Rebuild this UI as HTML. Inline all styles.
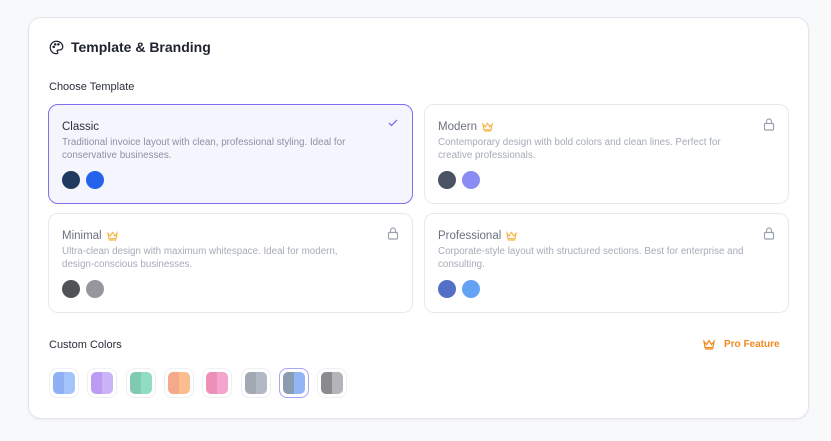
<!DOCTYPE html>
<html><head><style>
*{box-sizing:border-box;margin:0;padding:0}
body{width:831px;height:441px;background:#f8f9fb;font-family:"Liberation Sans",sans-serif;position:relative;overflow:hidden}
.outer{position:absolute;left:28px;top:17px;width:781px;height:402px;background:#fff;border:1px solid #e3e6ec;border-radius:13px;box-shadow:0 1px 2px rgba(0,0,0,.06)}
.h{position:absolute;left:49px;top:39px;font-size:14px;font-weight:bold;color:#1f2330;display:flex;align-items:center;gap:7px}
.lbl{position:absolute;left:49px;font-size:11px;color:#2a2f3a}
.card{position:absolute;width:365px;height:100px;border:1px solid #e6e9ef;border-radius:10px;background:#fff}
.card.sel{border-color:#7b6ff0;background:#f5f5fe}
.t{position:absolute;left:13px;top:16px;font-size:11.5px;color:#2a2f3a;display:flex;align-items:center;gap:5px}
.card.lk .t{color:#6b7080}
.d{position:absolute;left:13px;top:31px;width:300px;font-size:9.8px;line-height:13px;color:#8a92a3}
.card.lk .d{color:#a5abb8}
.dots{position:absolute;left:13px;top:66px;display:flex;gap:6px}
.dots span{width:18px;height:18px;border-radius:50%}
.ic{position:absolute;right:13px;top:13px}
.sw{position:absolute;top:368px;width:30px;height:30px;border-radius:8px;border:1px solid #eef0f4;padding:3px;background:#fff}
.sw.on{border:1.5px solid #a9a4f5}
.sw div{width:100%;height:100%;border-radius:5px;display:flex;overflow:hidden}
.sw div i{flex:1}
</style></head><body>
<div class="outer"></div>
<div class="h"><svg width="15" height="15" viewBox="0 0 24 24" fill="none" stroke="#1f2330" stroke-width="2"><path d="M12 2a10 10 0 0 0 0 20c1.5 0 2-1 2-2s-1-1.5-1-2.5 1-1.5 2-1.5h2a5 5 0 0 0 5-5C22 6 17.5 2 12 2z"/><circle cx="7.5" cy="11" r="1" fill="#1f2330"/><circle cx="10" cy="7" r="1" fill="#1f2330"/><circle cx="15" cy="7" r="1" fill="#1f2330"/></svg>Template &amp; Branding</div>
<div class="lbl" style="top:81px">Choose Template</div>

<div class="card sel" style="left:48px;top:104px"><div class="t">Classic</div>
<svg class="ic" style="top:12px" width="12" height="12" viewBox="0 0 24 24" fill="none" stroke="#7b6ff0" stroke-width="2.5"><path d="M4 12l5 5L20 6"/></svg>
<div class="d">Traditional invoice layout with clean, professional styling. Ideal for conservative businesses.</div>
<div class="dots"><span style="background:#1e3a5f"></span><span style="background:#2563eb"></span></div></div>

<div class="card lk" style="left:424px;top:104px"><div class="t">Modern <svg width="11" height="10" viewBox="0 0 24 22" fill="none" stroke="#f5b547" stroke-width="2.5"><path d="M2 5l5 6 5-8 5 8 5-6-2 12H4z M4 20h16"/></svg></div>
<svg class="ic" width="12" height="13" viewBox="0 0 24 26" fill="none" stroke="#9aa1ae" stroke-width="2.3"><rect x="3" y="11" width="18" height="13" rx="2"/><path d="M7 11V7a5 5 0 0 1 10 0v4"/></svg>
<div class="d">Contemporary design with bold colors and clean lines. Perfect for creative professionals.</div>
<div class="dots"><span style="background:#4b5261"></span><span style="background:#8b8cf3"></span></div></div>

<div class="card lk" style="left:48px;top:213px"><div class="t">Minimal <svg width="11" height="10" viewBox="0 0 24 22" fill="none" stroke="#f5b547" stroke-width="2.5"><path d="M2 5l5 6 5-8 5 8 5-6-2 12H4z M4 20h16"/></svg></div>
<svg class="ic" width="12" height="13" viewBox="0 0 24 26" fill="none" stroke="#9aa1ae" stroke-width="2.3"><rect x="3" y="11" width="18" height="13" rx="2"/><path d="M7 11V7a5 5 0 0 1 10 0v4"/></svg>
<div class="d">Ultra-clean design with maximum whitespace. Ideal for modern, design-conscious businesses.</div>
<div class="dots"><span style="background:#515257"></span><span style="background:#96969d"></span></div></div>

<div class="card lk" style="left:424px;top:213px"><div class="t">Professional <svg width="11" height="10" viewBox="0 0 24 22" fill="none" stroke="#f5b547" stroke-width="2.5"><path d="M2 5l5 6 5-8 5 8 5-6-2 12H4z M4 20h16"/></svg></div>
<svg class="ic" width="12" height="13" viewBox="0 0 24 26" fill="none" stroke="#9aa1ae" stroke-width="2.3"><rect x="3" y="11" width="18" height="13" rx="2"/><path d="M7 11V7a5 5 0 0 1 10 0v4"/></svg>
<div class="d" style="width:330px">Corporate-style layout with structured sections. Best for enterprise and consulting.</div>
<div class="dots"><span style="background:#5470c6"></span><span style="background:#63a2f5"></span></div></div>

<div class="lbl" style="top:339px">Custom Colors</div>
<div style="position:absolute;left:703px;top:339px;font-size:10px;font-weight:bold;color:#f08a24;display:flex;align-items:center;gap:9px"><svg width="12" height="11" viewBox="0 0 24 22" fill="none" stroke="#f08a24" stroke-width="2.5"><path d="M2 5l5 6 5-8 5 8 5-6-2 12H4z M4 20h16"/></svg>Pro Feature</div>

<div class="sw" style="left:49px"><div><i style="background:#8fb0f5"></i><i style="background:#a3c3fb"></i></div></div>
<div class="sw" style="left:87px"><div><i style="background:#bc9bf2"></i><i style="background:#cbb3f8"></i></div></div>
<div class="sw" style="left:126px"><div><i style="background:#80c9b3"></i><i style="background:#8fdec3"></i></div></div>
<div class="sw" style="left:164px"><div><i style="background:#f4a98a"></i><i style="background:#fbbc8e"></i></div></div>
<div class="sw" style="left:202px"><div><i style="background:#ec90b7"></i><i style="background:#f4a5cd"></i></div></div>
<div class="sw" style="left:241px"><div><i style="background:#a3a9b2"></i><i style="background:#b3b9c4"></i></div></div>
<div class="sw on" style="left:279px"><div><i style="background:#8b9bb0"></i><i style="background:#93b5f5"></i></div></div>
<div class="sw" style="left:317px"><div><i style="background:#8b8b8d"></i><i style="background:#b5b5b9"></i></div></div>
</body></html>
